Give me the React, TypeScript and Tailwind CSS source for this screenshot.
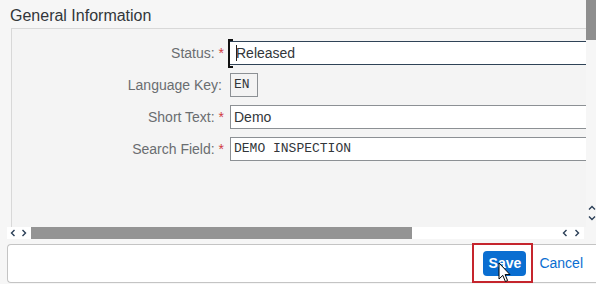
import React from "react";

const ChevL = () => (
  <svg width="6" height="8" viewBox="0 0 6 8" className="block">
    <path d="M4.5 1 L1.5 4 L4.5 7" fill="none" stroke="#2b3f57" strokeWidth="1.4" />
  </svg>
);
const ChevR = () => (
  <svg width="6" height="8" viewBox="0 0 6 8" className="block">
    <path d="M1.5 1 L4.5 4 L1.5 7" fill="none" stroke="#2b3f57" strokeWidth="1.4" />
  </svg>
);
const ChevU = () => (
  <svg width="8" height="6" viewBox="0 0 8 6" className="block">
    <path d="M1 4.5 L4 1.5 L7 4.5" fill="none" stroke="#2b3f57" strokeWidth="1.4" />
  </svg>
);
const ChevD = () => (
  <svg width="8" height="6" viewBox="0 0 8 6" className="block">
    <path d="M1 1.5 L4 4.5 L7 1.5" fill="none" stroke="#2b3f57" strokeWidth="1.4" />
  </svg>
);

function Row({ label, req, children }: { label: string; req?: boolean; children: React.ReactNode }) {
  return (
    <div className="flex items-center h-[24px]">
      <div className="w-[212px] text-right text-[14px] text-[#6a6d70] whitespace-nowrap">
        {label}
        {req ? <span className="text-[#d0393f]"> *</span> : <span className="inline-block w-[2px]" />}
      </div>
      <div className="ml-[6px] flex-1 h-full flex">{children}</div>
    </div>
  );
}

export default function App() {
  return (
    <div className="relative w-[596px] h-[284px] overflow-hidden bg-[#f6f6f6] font-['Liberation_Sans',Arial,sans-serif]">
      <div className="flex h-[240px]">
        <div className="w-[586px] flex flex-col">
          <div className="h-[28px] pl-[10px] pt-[6px] text-[16px] leading-[20px] text-[#32363a]">General Information</div>
          <div className="ml-[11px] h-[199px] border-l border-t border-[#d8d8d8] bg-[#f4f4f4] pt-[12px] flex flex-col gap-[8px]">
            <Row label="Status:" req>
              <div className="flex-1 bg-white border-y border-[#2f4357] flex items-center pl-[6px] text-[14px] text-[#32363a]">Released</div>
            </Row>
            <Row label="Language Key:">
              <div className="w-[28px] bg-[#f3f3f3] border border-[#8c9094] flex items-center pl-[3px] text-[13px] text-[#32363a] font-['Liberation_Mono',monospace]">EN</div>
            </Row>
            <Row label="Short Text:" req>
              <div className="flex-1 bg-white border border-r-0 border-[#8c9094] flex items-center pl-[3px] text-[14px] text-[#32363a]">Demo</div>
            </Row>
            <Row label="Search Field:" req>
              <div className="flex-1 bg-white border border-r-0 border-[#8c9094] flex items-center pl-[3px] text-[13px] text-[#32363a] font-['Liberation_Mono',monospace]">DEMO INSPECTION</div>
            </Row>
          </div>
          <div className="flex h-[12px]">
            <div className="w-[7px]" />
            <div className="w-[24px] bg-white flex items-center gap-[5px] pl-[3px]">
              <ChevL />
              <ChevR />
            </div>
            <div className="w-[381px] bg-[#949494]" />
            <div className="flex-1 bg-white flex items-center justify-end gap-[6px] pr-[4px] mr-[2px]">
              <ChevL />
              <ChevR />
            </div>
          </div>
        </div>
        <div className="w-[10px] flex flex-col">
          <div className="h-[40px] bg-[#8e8e8e]" />
          <div className="h-[165px]" />
          <div className="flex flex-col items-center gap-[4px] pl-[1px]">
            <ChevU />
            <ChevD />
          </div>
        </div>
      </div>
      <div className="mt-[4px] ml-[7px] w-[589px] h-[39px] bg-white border border-r-0 border-[#c4c4c4] rounded-l-[4px] flex items-center justify-end pr-[13px]">
        <div className="w-[43px] h-[25px] rounded-[4px] bg-[#0a6ed1] text-white font-bold text-[14px] flex items-center justify-center">Save</div>
        <div className="ml-[13px] text-[14px] text-[#0a6ed1]">Cancel</div>
      </div>

      <svg className="absolute left-[227px] top-[39px]" width="8" height="29" viewBox="0 0 8 29">
        <path d="M6 1 H2 V28 H6" fill="none" stroke="#111" strokeWidth="2" />
      </svg>
      <div className="absolute left-[236px] top-[45px] w-[1px] h-[16px] bg-[#222]" />

      <div className="absolute left-[472px] top-[243px] w-[61px] h-[40px] border-2 border-[#c5252d]" />

      <svg className="absolute left-[498px] top-[262px]" width="14" height="22" viewBox="0 0 14 22">
        <path d="M1 1 V17 L4.8 13.4 L7.4 19.5 L9.6 18.6 L7.1 12.6 L12 12.6 Z" fill="#fff" stroke="#000" strokeWidth="1" strokeLinejoin="round" />
      </svg>
    </div>
  );
}
